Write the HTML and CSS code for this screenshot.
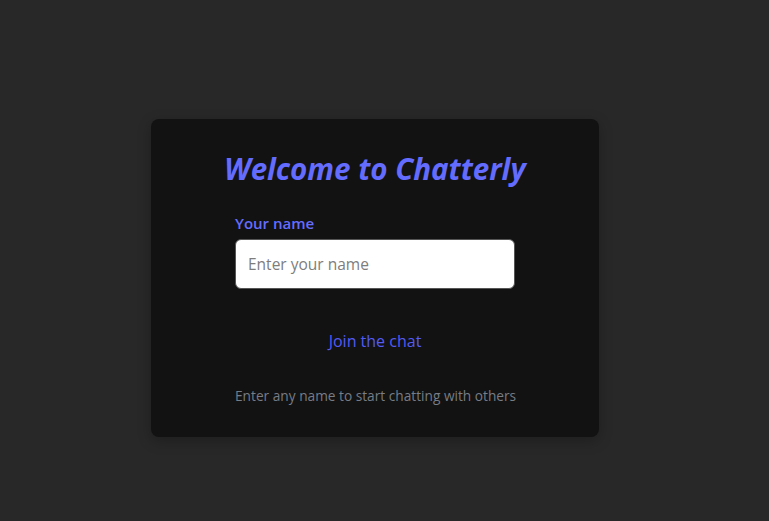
FILE: index.html
```html
<!DOCTYPE html>
<html lang="en">
<head>
<meta charset="utf-8">
<title>Chatterly</title>
<link rel="stylesheet" href="styles.css">
</head>
<body>
<main class="page">
  <section class="card">
    <h1 class="title">Welcome to Chatterly</h1>
    <form class="form" onsubmit="return false">
      <label class="label" for="name">Your name</label>
      <input class="input" id="name" type="text" placeholder="Enter your name">
      <button class="join" type="submit">Join the chat</button>
      <p class="hint">Enter any name to start chatting with others</p>
    </form>
  </section>
</main>
</body>
</html>
```
FILE: styles.css
```css
html, body {
  margin: 0;
  padding: 0;
  height: 100%;
}
body {
  background: #282828;
  font-family: "Open Sans", "Noto Sans", sans-serif;
}
.page {
  display: flex;
  align-items: flex-start;
  padding: 119px 0 0 151px;
  box-sizing: border-box;
  min-height: 100%;
}
.card {
  width: 448px;
  box-sizing: border-box;
  padding: 32px 24px 31px;
  background: #121212;
  border-radius: 8px;
  box-shadow: 0 4px 14px rgba(0, 0, 0, 0.25);
  display: flex;
  flex-direction: column;
  align-items: center;
}
.title {
  margin: 0;
  height: 36px;
  line-height: 36px;
  font-size: 29.5px;
  font-weight: 700;
  font-style: italic;
  color: #646cff;
  white-space: nowrap;
}
.form {
  width: 280px;
  margin-top: 24px;
  display: flex;
  flex-direction: column;
}
.label {
  height: 24px;
  line-height: 24px;
  font-size: 15px;
  font-weight: 600;
  color: #646cff;
}
.input {
  margin-top: 4px;
  height: 50px;
  box-sizing: border-box;
  padding: 0 12px;
  border: 1px solid #555;
  border-radius: 6px;
  background: #fff;
  font-family: inherit;
  font-size: 15.5px;
  color: #222;
}
.input::placeholder {
  color: #7d7d7d;
}
.join {
  margin-top: 30px;
  align-self: center;
  height: 44px;
  padding: 0 16px;
  border: none;
  background: transparent;
  font-family: inherit;
  font-size: 16px;
  color: #535bf2;
  cursor: pointer;
}
.hint {
  margin: 23px 0 0;
  height: 20px;
  line-height: 20px;
  text-align: center;
  font-size: 13.7px;
  color: #777c85;
  white-space: nowrap;
}
```
